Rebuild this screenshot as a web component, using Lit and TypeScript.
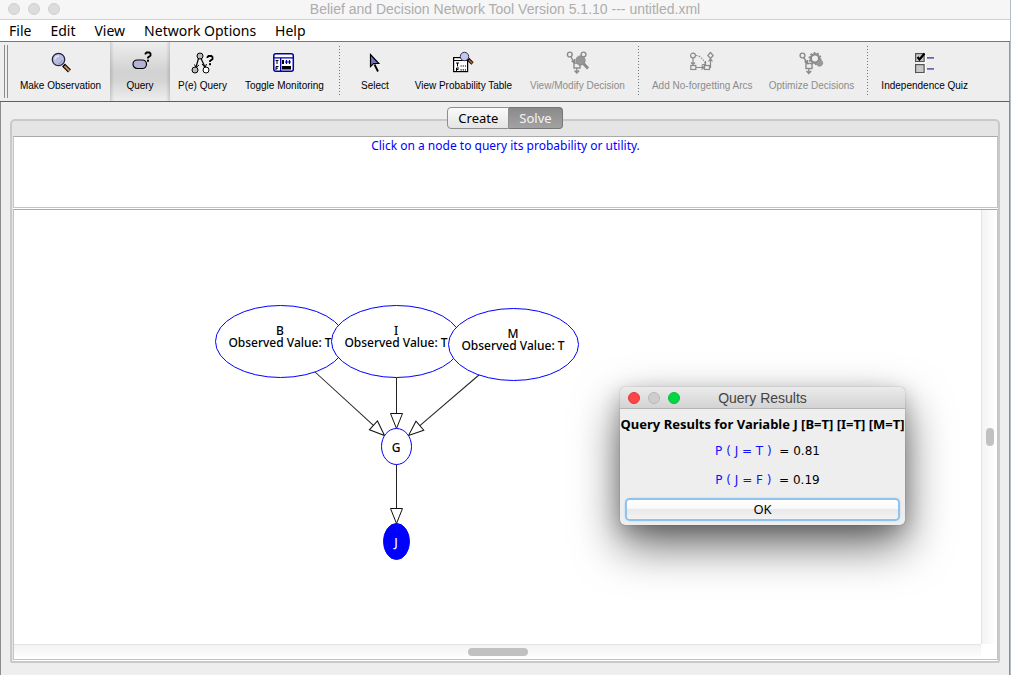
import { LitElement, html, svg, css } from "lit";
import { customElement, property, state } from "lit/decorators.js";
import { classMap } from "lit/directives/class-map.js";

const question = (x: number, y: number) => svg`
  <path d="M${x} ${y + 3}V${y + 2}L${x + 1} ${y + 1}H${x + 4}L${x + 5} ${y + 2}V${y + 4}L${x + 2.5} ${y + 6}V${y + 7}"
    fill="none" stroke="#000" stroke-width="1.8" />
  <rect x=${x + 1.5} y=${y + 8.2} width="2" height="2" fill="#000" />`;

const icons: Record<string, unknown> = {
  observe: svg`
    <path d="M14.500 14L20.500 20" stroke="#000" stroke-width="4" />
    <path d="M15.500 15L20.500 20" stroke="#c98d5c" stroke-width="2" />
    <circle cx="9.500" cy="8.500" r="6.200" fill="#b9bde0" stroke="#23233d" stroke-width="1.300" />
    <path d="M6 8.500A4 4 0 0 1 10 5" fill="none" stroke="#e6e8f8" stroke-width="1.500" />
    <path d="M9 12.500A4 4 0 0 0 13 9" fill="none" stroke="#9a9fc8" stroke-width="1.500" />`,
  query: svg`
    <rect x="5" y="9" width="13.500" height="8.500" rx="4.200" fill="#b3b3d6" stroke="#000" stroke-width="1.200" />
    ${question(17.5, 0.5)}`,
  evidence: svg`
    <path d="M8.500 7.500L6 16M11 7.500L15 16" stroke="#000" stroke-width="1.200" />
    <path d="M4.500 13.500L6 16.500L9 14M12 13L15 16.500L16.500 13" fill="none" stroke="#000" />
    <circle cx="10" cy="5" r="3" fill="#bbb" stroke="#000" />
    <circle cx="5" cy="19" r="3" fill="#bbb" stroke="#000" />
    <circle cx="16" cy="19" r="3" fill="#fff" stroke="#000" />
    ${question(17.5, 4)}`,
  monitor: svg`
    <rect x="1.800" y="2.800" width="19.500" height="17.500" rx="2" fill="#fff" stroke="#0000b0" stroke-width="1.500" />
    <path d="M2 6.800H21M8.700 7V20" stroke="#0000b0" stroke-width="1.300" />
    <path d="M3.500 9.500H6.500M5 9.500V13M4 19V15.500H6.500M4 17.200H6" fill="none" stroke="#000" />
    <path d="M10 9h2v4h-2zM10 15h9v3.500h-9z" fill="#000" />
    <path d="M14.500 9V13M17.500 9V13M13 11H19" stroke="#0000b0" stroke-width="1.200" />`,
  select: svg`
    <path d="M11.500 13.500L15 20.500" stroke="#000" stroke-width="1.800" />
    <path d="M7.500 3.500V15.500L10.500 12.500H15.800Z" fill="#7474b8" stroke="#000" stroke-width="1.200" />`,
  table: svg`
    <rect x="2.600" y="6.600" width="14" height="14" fill="#fff" stroke="#000" stroke-width="1.200" />
    <path d="M3 9.500H16.500" stroke="#000" />
    <path d="M5 12H8M6.500 12V15.500M5.500 20V17H8M5.500 18.500H7.500" fill="none" stroke="#000" />
    <path d="M9.500 15H15M9.500 18.800H15" stroke="#000" stroke-width="1.200" stroke-dasharray="1.200 1" />
    <path d="M17 8L21.500 12.500" stroke="#000" stroke-width="3.200" />
    <path d="M18 9L21.500 12.500" stroke="#b5713c" stroke-width="1.600" />
    <circle cx="13.500" cy="5.500" r="4.200" fill="#c3c8ea" stroke="#333350" />`,
  decision: svg`
    <g fill="none" stroke="#8a8a8a" stroke-width="1.400">
      <circle cx="4.800" cy="3.500" r="2.400" /><circle cx="18.500" cy="3.500" r="2.400" />
      <path d="M6 6L9.500 12M6.500 10L9.500 12V8" />
      <rect x="9" y="12" width="6" height="5" /><path d="M11.800 17V22M9.500 19.500L11.800 22L14.200 19.500" />
      <path d="M18 12L23 17.500" stroke-width="2.800" />
    </g>
    <circle cx="15.500" cy="9.500" r="4.600" fill="#979797" stroke="#8a8a8a" />`,
  arcs: svg`
    <g fill="none" stroke="#8a8a8a" stroke-width="1.200">
      <circle cx="3" cy="4.500" r="2.400" /><path d="M20.500 1.500L23.200 4.500L20.500 7.500L17.800 4.500Z" />
      <path d="M3 7V14M1 11.500L3 13.500L5 11.500M20.500 8V17M18.500 10.500L20.500 8L22.500 10.500" />
      <rect x="0.800" y="14.500" width="5" height="4" /><rect x="14.500" y="14.500" width="5" height="4" />
      <path d="M6 16.500H14M11.500 14.500L14 16.500L11.500 18.500M15.500 10V13.500H12" />
      <path d="M6 4.500Q12 5 15.500 13" stroke-dasharray="1.500 1.300" />
    </g>`,
  optimize: svg`
    <g fill="none" stroke="#8a8a8a" stroke-width="1.400">
      <circle cx="2.500" cy="4.500" r="2.400" /><path d="M4 7L7.500 12.500M4.500 10.500L7.500 12.500V9" />
      <rect x="6" y="12.500" width="6" height="5" /><path d="M8.800 17.500V22.500M6.500 20L8.800 22.500L11.200 20" />
      <circle cx="15" cy="7.500" r="4.200" stroke-width="2.400" />
      <circle cx="15" cy="7.500" r="5.800" stroke-width="1.400" stroke-dasharray="1.800 1.800" />
    </g>
    <circle cx="19.500" cy="12" r="3.200" fill="#999" stroke="#8a8a8a" stroke-dasharray="1.500 1" />`,
  quiz: svg`
    <g stroke="#555" stroke-width="1.200" fill="#c9c9c9">
      <rect x="2.600" y="2.600" width="8.500" height="8" /><rect x="2.600" y="13.600" width="8.500" height="8" />
    </g>
    <path d="M12.500 2V11.800H3M12.500 13V22.800H3" fill="none" stroke="#fff" />
    <path d="M4.500 6L6.500 8.500L11.500 2.500" fill="none" stroke="#000" stroke-width="2.200" />
    <path d="M14 6.800H21M14 17.800H21" stroke="#6767a5" stroke-width="1.800" />`,
};

type Tool = { icon: string; label: string; size?: "m" | "l"; off?: boolean };
const toolGroups: Tool[][] = [
  [
    { icon: "observe", label: "Make Observation", size: "m" },
    { icon: "query", label: "Query" },
    { icon: "evidence", label: "P(e) Query" },
    { icon: "monitor", label: "Toggle Monitoring", size: "m" },
  ],
  [
    { icon: "select", label: "Select" },
    { icon: "table", label: "View Probability Table", size: "l" },
    { icon: "decision", label: "View/Modify Decision", size: "m", off: true },
  ],
  [
    { icon: "arcs", label: "Add No-forgetting Arcs", size: "l", off: true },
    { icon: "optimize", label: "Optimize Decisions", size: "m", off: true },
  ],
  [{ icon: "quiz", label: "Independence Quiz", size: "m" }],
];

@customElement("tool-bar")
class ToolBar extends LitElement {
  @state() active = "query";

  static styles = css`
    :host {
      display: flex;
      height: 60px;
      box-sizing: border-box;
      border-bottom: 1px solid #5f5f5f;
      padding-left: 4px;
      background: #eee;
      overflow: hidden;
    }
    .grip {
      width: 2px;
      margin: 3px 3px 3px 0;
      border: solid #8c8c8c;
      border-width: 0 1px;
      flex: none;
    }
    .group { display: flex; }
    .group + .group::before {
      content: "";
      width: 1px;
      margin: 4px 5px;
      background: repeating-linear-gradient(#777 0 1px, transparent 1px 3px);
    }
    button {
      display: flex;
      flex-direction: column;
      align-items: center;
      gap: 4px;
      min-width: 60px;
      padding: 9px 8px 0;
      margin: 0;
      border: 0;
      background: none;
      color: #000;
      font: 10px/14px "Liberation Sans", Arial, sans-serif;
      white-space: nowrap;
    }
    .m { min-width: 99px; }
    .l { min-width: 117px; }
    button:disabled { color: #8c8c8c; }
    .on {
      background: linear-gradient(90deg, #0002, transparent 4px, transparent 56px, #0002),
        linear-gradient(#eee, #d2d2d2 50%, #d4d4d4 65%, #eee);
    }
    svg { display: block; overflow: visible; }
  `;

  render() {
    return html`<div class="grip"></div>
      ${toolGroups.map(
        (g) => html`<div class="group">
          ${g.map(
            (t) => html`<button
              class=${classMap({ on: t.icon === this.active, m: t.size === "m", l: t.size === "l" })}
              ?disabled=${t.off}
              @click=${() => (this.active = t.icon)}
            >
              <svg width="24" height="24" viewBox="0 0 24 24" aria-hidden="true">${icons[t.icon]}</svg>
              ${t.label}
            </button>`
          )}
        </div>`
      )}`;
  }
}

type NetNode = { name: string; x: number; y: number; rx: number; ry: number; observed?: string; queried?: boolean };
const nodes: NetNode[] = [
  { name: "B", x: 266, y: 131, rx: 65, ry: 36, observed: "T" },
  { name: "I", x: 382, y: 131, rx: 65, ry: 36, observed: "T" },
  { name: "M", x: 499, y: 134, rx: 65, ry: 36, observed: "T" },
  { name: "G", x: 382, y: 236, rx: 15, ry: 18 },
  { name: "J", x: 382, y: 331, rx: 13, ry: 18, queried: true },
];
const arcs = [
  { x1: 300, y1: 161, x2: 370, y2: 225 },
  { x1: 382, y1: 167, x2: 382, y2: 218 },
  { x1: 465, y1: 164, x2: 394, y2: 225 },
  { x1: 382, y1: 254, x2: 382, y2: 313 },
];

@customElement("network-graph")
class NetworkGraph extends LitElement {
  static styles = css`
    :host { display: block; overflow: hidden; }
    svg { display: block; width: 100%; height: 100%; }
    text {
      font: 500 12px "Noto Sans", "Open Sans", sans-serif;
      text-anchor: middle;
      fill: #000;
    }
    ellipse { fill: #fff; stroke: #00f; }
    .queried ellipse { fill: #00f; }
    .queried text { fill: #fff; }
    .arc { stroke: #222; }
    .head { fill: #fff; stroke: #111; }
  `;

  arc(a: (typeof arcs)[number]) {
    const len = Math.hypot(a.x2 - a.x1, a.y2 - a.y1);
    const angle = (Math.atan2(a.y2 - a.y1, a.x2 - a.x1) * 180) / Math.PI;
    return svg`<g transform="translate(${a.x1 + 0.5} ${a.y1 + 0.5}) rotate(${angle})">
      <line class="arc" x2=${len - 15} />
      <path class="head" d="M${len} 0l-15 -6v12z" />
    </g>`;
  }

  node(n: NetNode) {
    return svg`<g class=${n.queried ? "queried" : ""}>
      <ellipse cx=${n.x + 0.5} cy=${n.y + 0.5} rx=${n.rx} ry=${n.ry} />
      <text x=${n.x} y=${n.observed ? n.y - 6 : n.y + 6}>${n.name}</text>
      ${n.observed ? svg`<text x=${n.x} y=${n.y + 6}>Observed Value: ${n.observed}</text>` : ""}
    </g>`;
  }

  render() {
    return html`<svg role="img" aria-label="Belief network">
      ${arcs.map((a) => this.arc(a))} ${nodes.map((n) => this.node(n))}
    </svg>`;
  }
}

@customElement("query-results")
class QueryResults extends LitElement {
  @property() variable = "J";
  rows = [
    { value: "T", p: "0.81" },
    { value: "F", p: "0.19" },
  ];

  static styles = css`
    :host {
      display: block;
      border-radius: 5px;
      background: #eee;
      box-shadow: 0 0 1px #0008, 0 20px 46px #0009, 0 6px 20px #0003;
      font: 12px/16px "Noto Sans", "Open Sans", sans-serif;
      text-align: center;
    }
    header {
      position: relative;
      height: 21px;
      border-bottom: 1px solid #b4b4b4;
      border-radius: 5px 5px 0 0;
      background: linear-gradient(#ebebeb, #d3d3d3);
      color: #444;
      font: 14px/22px "Liberation Sans", Arial, sans-serif;
    }
    .lights { position: absolute; left: 8px; top: 5px; display: flex; gap: 8px; }
    .lights i { width: 12px; height: 12px; box-sizing: border-box; border-radius: 50%; border: 1px solid #e0383a; background: #ff4445; }
    .lights .min { border-color: #b9b9b9; background: #cdcdcd; }
    .lights .max { border-color: #0bbd3a; background: #00d742; }
    h2 { margin: 0; padding-top: 7px; font-size: 13px; line-height: 16px; white-space: nowrap; display: flex; justify-content: center; }
    p { margin: 0; padding: 11px 0 2px 10px; white-space: pre; font: 12px/16px "DejaVu Sans", sans-serif; }
    .p { color: #11f; }
    button {
      display: block;
      width: calc(100% - 14px);
      height: 19px;
      margin: 10px 7px 0;
      padding: 0;
      border: 0;
      border-radius: 3px;
      background: linear-gradient(#fff, #f8f8f8 50%, #e9e9e9 50%, #f2f2f2);
      box-shadow: 0 0 0 2px #8fc3ee, 0 0 2px 2px #a9d2f5;
      color: #000;
      font: 13px/19px "Noto Sans", "Open Sans", sans-serif;
    }
    footer { padding-bottom: 6px; }
  `;

  render() {
    return html`<header>
        <span class="lights"><i></i><i class="min"></i><i class="max"></i></span>Query Results
      </header>
      <h2>Query Results for Variable ${this.variable} [B=T] [I=T] [M=T]</h2>
      ${this.rows.map(
        (r) => html`<p><span class="p">P ( ${this.variable} = ${r.value} )</span>  = ${r.p}</p>`
      )}
      <footer><button>OK</button></footer>`;
  }
}

@customElement("app-root")
class AppRoot extends LitElement {
  @state() mode = "Solve";

  static styles = css`
    :host {
      display: flex;
      flex-direction: column;
      height: 100vh;
      box-sizing: border-box;
      border-right: 1px solid #b3bcc2;
      overflow: hidden;
      background: #eee;
      font: 12px/16px "Noto Sans", "Open Sans", sans-serif;
    }
    .title {
      position: relative;
      height: 19px;
      flex: none;
      border-bottom: 1px solid #d0d0d0;
      background: #f6f6f6;
      color: #adadad;
      text-align: center;
      font: 14px/19px "Liberation Sans", Arial, sans-serif;
    }
    .lights { position: absolute; left: 8px; top: 3px; display: flex; gap: 8px; }
    .lights i { width: 12px; height: 12px; box-sizing: border-box; border-radius: 50%; border: 1px solid #d0d0d0; background: #dcdcdc; }
    nav {
      display: flex;
      gap: 19px;
      height: 21px;
      flex: none;
      padding-left: 9px;
      border-bottom: 1px solid #777;
      background: #fff;
    }
    nav button {
      padding: 0;
      border: 0;
      background: none;
      color: #000;
      font: 14px/21px "Noto Sans", "Open Sans", sans-serif;
    }
    tool-bar { flex: none; border-right: 1px solid #999; }
    main {
      flex: 1;
      min-height: 0;
      display: flex;
      flex-direction: column;
      padding: 5px 9px 12px;
      border: solid #8c8c8c;
      border-width: 0 1px;
    }
    .tabs { display: flex; justify-content: center; height: 22px; margin-bottom: -10px; z-index: 1; }
    .tabs button {
      box-sizing: border-box;
      padding: 0 10px;
      border: 1px solid #8e8e8e;
      border-radius: 4px 0 0 4px;
      background: linear-gradient(#fafafa, #e4e4e4);
      color: #000;
      font: 13px/19px "Noto Sans", "Open Sans", sans-serif;
    }
    .tabs button + button { border-left: 0; border-radius: 0 4px 4px 0; }
    .tabs .on { background: linear-gradient(#8a8a8a, #a2a2a2); border-color: #777; color: #f4f4f4; }
    .panel {
      flex: 1;
      min-height: 0;
      display: flex;
      flex-direction: column;
      gap: 1px;
      padding: 15px 0 1px 1px;
      border: 2px solid #c9c9c9;
      border-radius: 5px 5px 2px 2px;
      background: #e5e5e5;
    }
    .message, .work { border: 1px solid #c4c4c4; border-top-color: #a9a9a9; background: #fff; box-shadow: 0 1px #fff; }
    .message { height: 70px; flex: none; color: #00f; text-align: center; line-height: 18px; }
    .work { position: relative; flex: 1; min-height: 0; display: grid; grid-template: 1fr 15px / 1fr 16px; }
    .bar { display: flex; align-items: center; justify-content: center; }
    .bar.v { border-left: 1px solid #e4e4e4; background: linear-gradient(90deg, #f3f3f3, #fff); }
    .bar.h { border-top: 1px solid #e4e4e4; background: linear-gradient(#f3f3f3, #fff); }
    .thumb { border-radius: 4px; background: #c1c1c1; }
    .v .thumb { width: 8px; height: 18px; margin-top: 20px; }
    .h .thumb { width: 60px; height: 8px; }
    query-results { position: absolute; left: 606px; top: 177px; width: 285px; }
  `;

  render() {
    return html`<div class="title">
        <span class="lights"><i></i><i></i><i></i></span>Belief and Decision Network Tool Version 5.1.10 --- untitled.xml
      </div>
      <nav>
        ${["File", "Edit", "View", "Network Options", "Help"].map((m) => html`<button>${m}</button>`)}
      </nav>
      <tool-bar></tool-bar>
      <main>
        <div class="tabs">
          ${["Create", "Solve"].map(
            (m) => html`<button class=${classMap({ on: m === this.mode })} @click=${() => (this.mode = m)}>${m}</button>`
          )}
        </div>
        <div class="panel">
          <div class="message">Click on a node to query its probability or utility.</div>
          <div class="work">
            <network-graph></network-graph>
            <div class="bar v"><div class="thumb"></div></div>
            <div class="bar h"><div class="thumb"></div></div>
            <query-results variable="J"></query-results>
          </div>
        </div>
      </main>`;
  }
}
